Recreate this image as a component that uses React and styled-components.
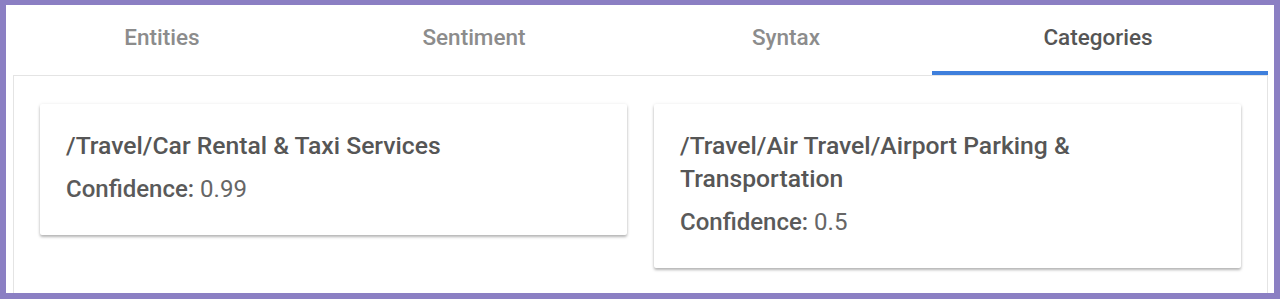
import React from "react";
import styled, { createGlobalStyle } from "styled-components";

const Global = createGlobalStyle`
  html, body { margin: 0; padding: 0; }
  body {
    background: #8b7fc3;
    font-family: Roboto, "Noto Sans", "Liberation Sans", sans-serif;
    -webkit-font-smoothing: antialiased;
  }
`;

const Frame = styled.div`
  height: 299px;
  box-sizing: border-box;
  padding: 5px 6px 6px 6px;
`;

const Sheet = styled.div`
  height: 100%;
  background: #ffffff;
  display: flex;
  flex-direction: column;
  overflow: hidden;
`;

const TabBar = styled.div`
  display: grid;
  grid-template-columns: repeat(4, 1fr);
  height: 70px;
  padding-right: 14px;
  margin-right: 6px;
`;

const Tab = styled.div`
  position: relative;
  display: flex;
  align-items: center;
  justify-content: center;
  font-size: 22.5px;
  font-weight: 500;
  color: ${(p) => (p.$active ? "#555555" : "#8c8c8c")};
  padding-bottom: 6px;

  ${(p) =>
    p.$active &&
    `
    &::after {
      content: "";
      position: absolute;
      left: -10px;
      right: -14px;
      bottom: 0;
      height: 4px;
      background: #3f7fdc;
    }
  `}
`;

const Panel = styled.div`
  flex: 1;
  margin: 0 6px 0 7px;
  border: 1px solid #e4e4e4;
  border-bottom: none;
  padding: 28px 26px 0 26px;
  display: grid;
  grid-template-columns: 1fr 1fr;
  column-gap: 27px;
  align-items: start;
`;

const Card = styled.div`
  background: #fff;
  border-radius: 2px;
  box-shadow: 0 2px 3px rgba(0, 0, 0, 0.28), 0 0 4px rgba(0, 0, 0, 0.06);
  padding: 25px 26px 29px 26px;
  color: #555555;
`;

const Title = styled.div`
  font-size: 24.7px;
  font-weight: 500;
  line-height: 33px;
  color: #565656;
`;

const Confidence = styled.div`
  margin-top: 11px;
  font-size: 24px;
  line-height: 33px;
  color: #666666;
`;

const Label = styled.span`
  font-weight: 500;
  color: #5a5a5a;
`;

const tabs = ["Entities", "Sentiment", "Syntax", "Categories"];
const categories = [
  { name: "/Travel/Car Rental & Taxi Services", confidence: "0.99" },
  { name: "/Travel/Air Travel/Airport Parking & Transportation", confidence: "0.5" },
];

export default function App() {
  return (
    <>
      <Global />
      <Frame>
        <Sheet>
          <TabBar>
            {tabs.map((t) => (
              <Tab key={t} $active={t === "Categories"}>
                {t}
              </Tab>
            ))}
          </TabBar>
          <Panel>
            {categories.map((c) => (
              <Card key={c.name}>
                <Title>{c.name}</Title>
                <Confidence>
                  <Label>Confidence:</Label> {c.confidence}
                </Confidence>
              </Card>
            ))}
          </Panel>
        </Sheet>
      </Frame>
    </>
  );
}
